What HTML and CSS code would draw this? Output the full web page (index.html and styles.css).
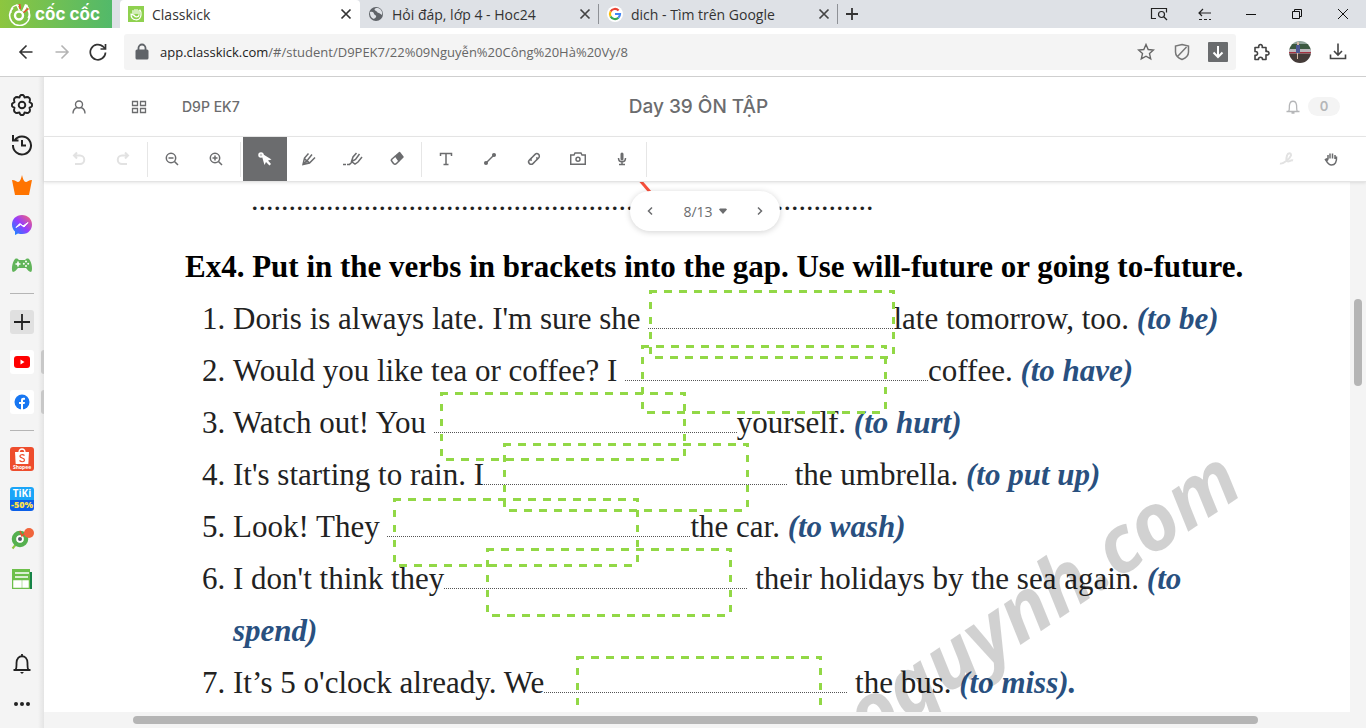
FILE: index.html
```html
<!DOCTYPE html>
<html lang="vi">
<head>
<meta charset="utf-8">
<title>Classkick</title>
<link rel="stylesheet" href="styles.css">
</head>
<body>
<div class="browser">
  <div class="tabbar">
    <div class="brand">
      <svg width="24" height="24" viewBox="0 0 24 24" fill="none"><path d="M5 6A10 10 0 1 0 20 8" stroke="#fff" stroke-width="1.6"/><path d="M3 11C2 4 9 2 12 4M19 4c3 3 3 9 1 12" stroke="#fff" stroke-width="1.2"/><circle cx="11" cy="13.500" r="4" stroke="#fff" stroke-width="2.400"/><path d="m11 9-3-6 1-1 3 6zM14 9l3-7 3 1-4 7z" fill="#fff"/><path d="m11.500 7-1-5 2 0 .5 5zM15 10l5-4 1 1-5 4z" fill="#ef4b2b"/></svg>
      <span>cốc cốc</span>
    </div>
    <div class="tab tab-active">
      <svg width="16" height="16" viewBox="0 0 16 16"><path fill="#8fd14f" d="M0 0h16v16H0z"/><g fill="none" stroke="#fff" stroke-width="1.200" stroke-linecap="round"><path d="M3 8c0 7 9 8 10 1 .3-2-.2-4-1-5M3 8l3 1.500M5 8V4.500M7 7.500V3.500M9 7.500V3.500M11 8V4.500M6 9c1 3 5 2 5 0"/></g></svg>
      <span class="tab-title">Classkick</span>
      <button class="tab-close" aria-label="Close tab"><svg width="12" height="12" viewBox="0 0 12 12"><path d="m1.500 1.500 9 9m0-9-9 9" stroke="#333" stroke-width="1.700"/></svg></button>
    </div>
    <div class="tab tab-divided">
      <svg width="16" height="16" viewBox="0 0 16 16"><circle cx="8" cy="8" r="7" fill="#5f6368"/><path d="M2 6c3-1 4 1 4 2s3 1 2 3-2 1-2 2l-2-1C2 10 2 8 2 6zM8 2c-2 1-2 2 0 3s1 2 3 2l3 2c1-3-1-6-4-7z" fill="#dee1e6"/></svg>
      <span class="tab-title">Hỏi đáp, lớp 4 - Hoc24</span>
      <button class="tab-close" aria-label="Close tab"><svg width="12" height="12" viewBox="0 0 12 12"><path d="m1.500 1.500 9 9m0-9-9 9" stroke="#444" stroke-width="1.700"/></svg></button>
    </div>
    <div class="tab tab-divided">
      <svg width="16" height="16" viewBox="0 0 16 16" fill="none"><circle cx="8" cy="8" r="8" fill="#fff"/><g stroke-width="2.200"><path d="M3.600 5.500A5 5 0 0 1 11.600 4.500" stroke="#ea4335"/><path d="M3.600 5.500a5 5 0 0 0 0 5" stroke="#fbbc05"/><path d="M3.600 10.500a5 5 0 0 0 7.800 1.200" stroke="#34a853"/><path d="M11.400 11.700A5 5 0 0 0 13 8H8" stroke="#4285f4"/></g></svg>
      <span class="tab-title">dich - Tìm trên Google</span>
      <button class="tab-close" aria-label="Close tab"><svg width="12" height="12" viewBox="0 0 12 12"><path d="m1.500 1.500 9 9m0-9-9 9" stroke="#444" stroke-width="1.700"/></svg></button>
    </div>
    <button class="new-tab" aria-label="New tab"><svg width="12" height="12" viewBox="0 0 12 12"><path d="M6 0v12M0 6h12" stroke="#333" stroke-width="1.800"/></svg></button>
    <div class="window-controls">
      <button aria-label="Search tabs"><svg width="18" height="14" viewBox="0 0 18 14" fill="none" stroke="#222" stroke-width="1.200"><path d="M6 11.500H1.500v-10h15v4"/><circle cx="11.500" cy="7.500" r="3"/><path d="m14 10 3 3"/></svg></button>
      <button aria-label="Restore"><svg width="16" height="14" viewBox="0 0 16 14" fill="none" stroke="#222" stroke-width="1.200"><path d="M14 6H2m4-4L2 6l3 3"/><path d="M2 12.500h12" stroke-dasharray="3 2"/></svg></button>
      <button aria-label="Minimize"><svg width="10" height="10" viewBox="0 0 10 10"><path d="M0 5.500h10" stroke="#111"/></svg></button>
      <button aria-label="Maximize"><svg width="10" height="10" viewBox="0 0 10 10" fill="none" stroke="#111"><path d="M.5 2.500h7v7h-7zM2.500 2.500v-2h7v7h-2"/></svg></button>
      <button aria-label="Close"><svg width="10" height="10" viewBox="0 0 10 10"><path d="m0 0 10 10M10 0 0 10" stroke="#111"/></svg></button>
    </div>
  </div>

  <div class="navbar">
    <div class="nav-buttons">
      <button aria-label="Back"><svg width="16" height="16" viewBox="0 0 16 16" fill="none" stroke="#333" stroke-width="1.600"><path d="M14.500 8H2m6.500-6.500L2 8l6.500 6.500"/></svg></button>
      <button aria-label="Forward"><svg width="16" height="16" viewBox="0 0 16 16" fill="none" stroke="#b4b4b4" stroke-width="1.600"><path d="M1.500 8H14M7.500 1.500 14 8l-6.500 6.500"/></svg></button>
      <button aria-label="Reload"><svg width="18" height="18" viewBox="0 0 18 18" fill="none" stroke="#333" stroke-width="1.700"><path d="M16.500 9.500A7.600 7.600 0 1 1 14 3.500l2 2M16.500 1v5h-5"/></svg></button>
    </div>
    <div class="address">
      <svg width="14" height="18" viewBox="0 0 14 18"><path d="M3.500 8V5a3.500 3.500 0 0 1 7 0v3" fill="none" stroke="#5f6368" stroke-width="1.800"/><rect x=".5" y="6.500" width="13" height="10" rx="1.500" fill="#5f6368"/></svg>
      <span class="url"><b>app.classkick.com</b>/#/student/D9PEK7/22%09Nguyễn%20Công%20Hà%20Vy/8</span>
      <button aria-label="Bookmark"><svg width="18" height="18" viewBox="0 0 18 18" fill="none" stroke="#666" stroke-width="1.400"><path d="m9 1.500 2.200 5 5.300.500-4 3.600 1.200 5.300L9 13.200l-4.700 2.700 1.200-5.300-4-3.600 5.300-.5z"/></svg></button>
      <button aria-label="Shield"><svg width="16" height="18" viewBox="0 0 16 18" fill="none" stroke="#777" stroke-width="1.500"><path d="M8 1.500 14.500 3v6c0 4-4 6.500-6.500 7.500C5.500 15.500 1.500 13 1.500 9V3zM3.500 13.500l9-9.500"/></svg></button>
      <button aria-label="Save page"><svg width="20" height="20" viewBox="0 0 20 20"><rect width="20" height="20" rx="1" fill="#6a6c6e"/><path d="M10 4v11m-4.500-4.500L10 15l4.500-4.500" fill="none" stroke="#fff" stroke-width="2"/></svg></button>
    </div>
    <div class="nav-tools">
      <button aria-label="Extensions"><svg width="18" height="18" viewBox="0 0 18 18" fill="none" stroke="#444" stroke-width="1.600" stroke-linejoin="round"><path d="M2 4.500h3.800c-1-4 4.400-4 3.400 0H13v4c4-1 4 4.400 0 3.400v4.600H9.500c.6-3-4.600-3-4 0H2v-4.200c3.400.6 3.400-4.400 0-3.800z"/></svg></button>
      <button aria-label="Profile"><svg width="22" height="22" viewBox="0 0 22 22"><clipPath id="avatar"><circle cx="11" cy="11" r="11"/></clipPath><g clip-path="url(#avatar)"><path fill="#8fa39a" d="M0 0h22v4H0z"/><path fill="#3c5941" d="M0 3h22v6H0z"/><path fill="#b9b7bb" d="M0 8h22v3H0z"/><path fill="#a33040" d="M0 11h22v1.500H0z"/><path fill="#453b39" d="M0 12.500h22V22H0z"/><path fill="#4b5793" d="M7 4h4v8H7z"/><path fill="#d5b9a8" d="M8 1h2v3H8zM8 12h1v6H8z"/></g></svg></button>
      <button aria-label="Downloads"><svg width="18" height="18" viewBox="0 0 18 18" fill="none" stroke="#444" stroke-width="1.600"><path d="M9 .5v11M5 8l4 4 4-4M1.500 11.500v4h15v-4"/></svg></button>
    </div>
  </div>

  <div class="body">
    <nav class="sidebar">
      <button aria-label="Settings"><svg width="22" height="22" viewBox="0 0 22 22" fill="none" stroke="#222" stroke-width="1.900" stroke-linejoin="round"><path d="m9 2 1-1h2l1 1 .5 1.500L16 3l1.500.3 1.200 1.200.3 1.500-.5 2.200L20 9l1 1v2l-1 1-1.500.7.5 2.300-.3 1.500-1.200 1.200-1.500.3-2.500-.5L13 20l-1 1h-2l-1-1-.5-1.500L6 19l-1.500-.3-1.200-1.200L3 16l.5-2.300L2 13l-1-1v-2l1-1 1.500-.8L3 6l.3-1.500 1.200-1.200L6 3l2.500.5z"/><circle cx="11" cy="11" r="3.300"/></svg></button>
      <button aria-label="History"><svg width="22" height="22" viewBox="0 0 22 22" fill="none" stroke="#222" stroke-width="2"><path d="M3.500 6.500A9 9 0 1 1 2 11M2 1v5.500h5.500M11 6v5.500h4"/></svg></button>
      <button aria-label="Rewards"><svg width="22" height="22" viewBox="0 0 22 22"><path d="M11 1c1 4 2 7 4 7 1 0 3-2 6-2l-3 15H4L1 6c3 0 5 2 6 2 2 0 3-3 4-7z" fill="#ff7400"/></svg></button>
      <button aria-label="Messenger"><svg width="22" height="22" viewBox="0 0 22 22"><defs><linearGradient id="msg" x1="0" y1="1" x2="1" y2="0"><stop stop-color="#0094ff"/><stop offset=".5" stop-color="#963cff"/><stop offset="1" stop-color="#ff6869"/></linearGradient></defs><path d="M11 1C5 1 1 5.300 1 10.600c0 3 1.300 5.500 3 7V21l3-1.500c10 2.500 14-4 14-9C21 5.300 17 1 11 1z" fill="url(#msg)"/><path d="m5 13.500 3.800-4 3.200 2.500 5-3.500-4 4.500-3.200-2.500z" fill="#fff" stroke="#fff"/></svg></button>
      <button aria-label="Games"><svg width="22" height="22" viewBox="0 0 22 22"><path d="M4 5c2-1 3 0 4 1h6c1-1 2-2 4-1 3 3 4 12 2 13-2 0-4-3-5-4H7c-1 1-3 4-5 4C0 17 1 8 4 5z" fill="#61b45a"/><path d="M7 7.500v5M4.500 10h5" stroke="#fff" stroke-width="1.600"/><g fill="#fff"><circle cx="15" cy="7.500" r="1"/><circle cx="15" cy="12" r="1"/><circle cx="12.800" cy="9.800" r="1"/><circle cx="17.200" cy="9.800" r="1"/></g></svg></button>
      <hr>
      <button class="tile tile-grey" aria-label="Add"><svg width="16" height="16" viewBox="0 0 16 16"><path d="M8 0v16M0 8h16" stroke="#222" stroke-width="1.800"/></svg></button>
      <button class="tile tile-open" aria-label="YouTube"><svg width="16" height="12" viewBox="0 0 16 12"><rect width="16" height="12" rx="3" fill="#f00"/><path d="m6.500 3.500 4 2.500-4 2.500z" fill="#fff"/></svg></button>
      <button class="tile tile-open" aria-label="Facebook"><svg width="16" height="16" viewBox="0 0 16 16"><circle cx="8" cy="8" r="7.500" fill="#1877f2"/><path d="M7 16v-6H5V8h2V6.500C7 4 8.500 3.500 11 4v1.700C9.500 5.500 9 5.800 9 6.800V8h2l-.4 2H9v6z" fill="#fff"/></svg></button>
      <hr>
      <button class="tile shopee" aria-label="Shopee"><svg width="24" height="24" viewBox="0 0 24 24"><path d="M5 5h14l-.7 12H5.700z" fill="#fff"/><path d="M9 5c.5-4 5.500-4 6 0" fill="none" stroke="#fff" stroke-width="1.300"/><path d="M14.500 8.500c-1.500-1.300-5-1-4.500 1s4.500 1 4.500 3.500-3.500 2-5 .5" fill="none" stroke="#ee4d2d" stroke-width="1.200"/><text x="12" y="22" text-anchor="middle" class="shop-label">Shopee</text></svg></button>
      <button class="tile tiki" aria-label="Tiki"><span>TiKi</span><b>-50%</b></button>
      <button aria-label="Coc Coc points"><svg width="24" height="24" viewBox="0 0 24 24" fill="none"><path d="m2.500 21.500 5-6" stroke="#8cc63f" stroke-width="2"/><circle cx="10" cy="12" r="6" stroke="#55b04f" stroke-width="4.500"/><circle cx="10" cy="12" r="3.500" fill="#fff"/><circle cx="10" cy="12" r="2" fill="#556" /><path d="m10 4 2 5 3-3" stroke="#ef4b2b" stroke-width="1.500"/><circle cx="19" cy="6" r="5" fill="#f0653c"/></svg></button>
      <button aria-label="News"><svg width="22" height="22" viewBox="0 0 22 22"><path d="M18 4h3v17H4z" fill="#168348"/><path d="M1 1h18v20H1z" fill="#6dbf4b"/><path d="M4 5h14M4 9h13M3 13h7v6H3zM12 13h5v6h-5z" fill="#fff" stroke="#fff" stroke-width="1.500"/></svg></button>
      <span class="spacer"></span>
      <button aria-label="Notifications"><svg width="20" height="22" viewBox="0 0 20 22" fill="none" stroke="#222" stroke-width="1.800"><path d="M1.500 17h17M3.500 17c1.300-2 1-4 1-7 0-9 11-9 11 0 0 3-.3 5 1 7M10 3.500V1"/><path d="M8 19h4l-2 2z" fill="#222" stroke="none"/></svg></button>
      <button aria-label="More"><svg width="18" height="6" viewBox="0 0 18 6" fill="#222"><circle cx="3" cy="3" r="2"/><circle cx="9" cy="3" r="2"/><circle cx="15" cy="3" r="2"/></svg></button>
    </nav>

    <main class="app">
      <header class="app-header">
        <div class="header-left">
          <button class="icon-button" aria-label="Account"><svg width="14" height="14" viewBox="0 0 14 14" fill="none" stroke="#6b6c6e" stroke-width="1.400"><circle cx="7" cy="4.500" r="3.500"/><path d="M1 13.500c0-4 2.500-5.500 4-6M13 13.500c0-4-2.500-5.500-4-6"/></svg></button>
          <button class="icon-button" aria-label="Assignments"><svg width="16" height="14" viewBox="0 0 16 14" fill="none" stroke="#6b6c6e" stroke-width="1.300"><path d="M1.500 1.500h5v4h-5zM9.500 1.500h5v4h-5zM1.500 8.500h5v4h-5zM9.500 8.500h5v4h-5z"/></svg></button>
          <span class="code">D9P EK7</span>
        </div>
        <h1>Day 39 ÔN TẬP</h1>
        <div class="header-right">
          <svg width="14" height="14" viewBox="0 0 14 14" fill="none" stroke="#b5b6b8" stroke-width="1.300"><path d="M.5 11.500h13M2.500 11.500C4 9.500 3 7 3.500 5c.7-5 6.300-5 7 0 .5 2-.5 4.500 1 6.500M5.500 13h3"/></svg>
          <span class="count">0</span>
        </div>
      </header>

      <div class="toolbar">
        <button class="faint" aria-label="Undo"><svg width="16" height="16" viewBox="0 0 16 16"><path d="M3 4.500h6a3.700 3.700 0 0 1 0 8.500H4M6 1.500l-3 3 3 3"/></svg></button>
        <button class="faint" aria-label="Redo"><svg width="16" height="16" viewBox="0 0 16 16"><path d="M13 4.500H7A3.700 3.700 0 0 0 7 13h5M10 1.500l3 3-3 3"/></svg></button>
        <span class="sep"></span>
        <button aria-label="Zoom out"><svg width="16" height="16" viewBox="0 0 16 16"><circle cx="7" cy="7" r="4.700"/><path d="m10.500 10.500 3.500 3.500M4.500 7h5"/></svg></button>
        <button aria-label="Zoom in"><svg width="16" height="16" viewBox="0 0 16 16"><circle cx="7" cy="7" r="4.700"/><path d="m10.500 10.500 3.500 3.500M4.500 7h5M7 4.500v5"/></svg></button>
        <span class="sep"></span>
        <button class="selected" aria-label="Select"><svg width="16" height="16" viewBox="0 0 16 16"><path d="m4 2 10.500 6.500-3.500 1 3 3.500-1.500 1.500-3.500-3.500L7.500 14z" fill="#fff" stroke="none"/><circle cx="4" cy="4" r="2" fill="#ccc" stroke="#fff"/></svg></button>
        <button aria-label="Pen"><svg width="16" height="16" viewBox="0 0 16 16"><path d="M7.500 2.500 3.500 7 2 13.500l6.500-1.500L14 6.500M2 13.500l5-5 4-5M3.500 7.500 5 9v2l2-.5 1.500 1.500"/></svg></button>
        <button aria-label="Highlighter"><svg width="20" height="16" viewBox="0 0 20 16"><path d="M13.500 2 10 6l-1.500 4.500L12 13l3-2 4-5M8.500 10.500l4-2 4-5.500M9.500 10.500l-3 3"/><path d="M0 13.500h7" stroke-dasharray="3 1"/></svg></button>
        <button aria-label="Eraser"><svg width="16" height="16" viewBox="0 0 16 16"><path d="m6.500 5 4-3.500L14 6l-4 4z" fill="#6b6c6e" stroke-linejoin="round"/><path d="M6.500 5 3 8c-1 1-1 1.500 0 2.500l1.500 2c1 1 2 1 3 0l2.500-2.500" stroke-linejoin="round"/></svg></button>
        <span class="sep"></span>
        <button aria-label="Text"><svg width="16" height="16" viewBox="0 0 16 16"><path d="M2.500 5V2.500h11V5M8 2.500v11M5.500 13.500h5"/></svg></button>
        <button aria-label="Line"><svg width="16" height="16" viewBox="0 0 16 16"><path d="m4 12 8-8"/><circle cx="4" cy="12" r="1.300" fill="#6b6c6e"/><circle cx="12" cy="4" r="1.300" fill="#6b6c6e"/></svg></button>
        <button aria-label="Link"><svg width="16" height="16" viewBox="0 0 16 16"><g transform="rotate(-45 8 8)"><path d="M9 10.500H4a2.500 2.500 0 0 1 0-5h3.500M7 5.500h5a2.500 2.500 0 0 1 0 5H8.500M9 10.500c1.500 0 2-1 2-2M7 5.500c-1.500 0-2 1-2 2"/></g></svg></button>
        <button aria-label="Camera"><svg width="16" height="16" viewBox="0 0 16 16"><path d="M.7 4H4l1-2h6l1 2h3.300v9.300H.7z"/><circle cx="8" cy="8.300" r="2"/></svg></button>
        <button aria-label="Record audio"><svg width="16" height="16" viewBox="0 0 16 16"><path d="M8 3v5" stroke-width="3" stroke-linecap="round"/><path d="M4.500 7c0 5 7 5 7 0M8 11v2.500M5 13.500h6"/></svg></button>
        <span class="sep"></span>
        <span class="spacer"></span>
        <button class="faint" aria-label="Signature"><svg width="16" height="16" viewBox="0 0 16 16"><path d="M1 12.500c3 1 10-5 11-8 0-3-3-3-4 0-1 4-1 6 1 6s3-2 5-1"/></svg></button>
        <button aria-label="Raise hand"><svg width="14" height="16" viewBox="0 0 14 16"><path d="M4 8.500V4M6 7.500V2.500M8.500 7.500V2.500M11 8V4M12.500 5.500C13 11 11 14 7.500 14 4 14 3 11 1.500 8.500l1-.5L4 9.500"/></svg></button>
      </div>

      <section class="workspace">
        <article class="sheet">
          <svg class="stroke" width="40" height="30" viewBox="0 0 40 30"><path d="m3-4 24 28" stroke="#f8503c" stroke-width="3"/></svg>
          <p class="leader">...................................................................................</p>
          <h2>Ex4. Put in the verbs in brackets into the gap. Use will-future or going to-future.</h2>
          <div class="items">
            <p><span class="num">1.</span><span>Doris is always late. I'm sure she <i class="gap gap-short"></i>late tomorrow, too. <em>(to be)</em></span></p>
            <p><span class="num">2.</span><span>Would you like tea or coffee? I <i class="gap"></i>coffee. <em>(to have)</em></span></p>
            <p><span class="num">3.</span><span>Watch out! You <i class="gap"></i>yourself. <em>(to hurt)</em></span></p>
            <p><span class="num">4.</span><span>It's starting to rain. I<i class="gap"></i> the umbrella. <em>(to put up)</em></span></p>
            <p><span class="num">5.</span><span>Look! They <i class="gap"></i>the car. <em>(to wash)</em></span></p>
            <p><span class="num">6.</span><span>I don't think they<i class="gap"></i> their holidays by the sea again. <em>(to<br>spend)</em></span></p>
            <p><span class="num">7.</span><span>It’s 5 o'clock already. We<i class="gap"></i> the bus. <em>(to miss).</em></span></p>
          </div>
          <div class="watermark">oquynh.com</div>
          <textarea class="answer a1" aria-label="Answer 1"></textarea>
          <textarea class="answer a2" aria-label="Answer 2"></textarea>
          <textarea class="answer a3" aria-label="Answer 3"></textarea>
          <textarea class="answer a4" aria-label="Answer 4"></textarea>
          <textarea class="answer a5" aria-label="Answer 5"></textarea>
          <textarea class="answer a6" aria-label="Answer 6"></textarea>
          <textarea class="answer a7" aria-label="Answer 7"></textarea>
        </article>
        <div class="track-y"><div class="thumb-y"></div></div>
        <div class="track-x"><div class="thumb-x"></div></div>
        <div class="pager">
          <button aria-label="Previous page"><svg width="8" height="10" viewBox="0 0 8 10" fill="none" stroke="#6b6c6e" stroke-width="1.500"><path d="M6 1.500 2.500 5 6 8.500"/></svg></button>
          <button class="page">8/13<svg width="8" height="6" viewBox="0 0 8 6"><path d="M1 .5h6l1 1L4 6 0 1.500z" fill="#6b6c6e"/></svg></button>
          <button aria-label="Next page"><svg width="8" height="10" viewBox="0 0 8 10" fill="none" stroke="#6b6c6e" stroke-width="1.500"><path d="M2 1.500 5.500 5 2 8.500"/></svg></button>
        </div>
      </section>
    </main>
  </div>
</div>
</body>
</html>
```
FILE: styles.css
```css
* { box-sizing: border-box; }
body { margin: 0; font-family: "Open Sans", "Noto Sans", sans-serif; font-size: 13px; color: #333; background: #fff; }
button { display: flex; align-items: center; justify-content: center; flex: none; padding: 0; border: 0; background: none; font: inherit; color: inherit; }
svg { display: block; flex: none; }
.spacer { flex: 1; }
.browser { display: flex; flex-direction: column; height: 100vh; overflow: hidden; }

.tabbar { display: flex; flex: none; height: 28px; background: #dee1e6; }
.brand { display: flex; align-items: center; gap: 3px; width: 112px; margin-right: 8px; padding-left: 8px; background: linear-gradient(90deg, #8dc63f, #52b96a); color: #fff; font-family: Inter, sans-serif; font-weight: 700; font-size: 17px; white-space: nowrap; }
.tab { display: flex; align-items: center; gap: 8px; width: 239px; padding: 0 8px; }
.tab-active { width: 240px; background: #fff; border-radius: 4px 4px 0 0; }
.tab-divided { background: linear-gradient(#8e9196, #8e9196) right center / 1px 20px no-repeat; }
.tab-title { flex: 1; font-size: 14px; white-space: nowrap; }
.new-tab { width: 28px; }
.window-controls { display: flex; margin-left: auto; }
.window-controls button { width: 46px; }

.navbar { display: flex; flex: none; align-items: center; height: 49px; border-bottom: 1px solid #cfcfcf; padding: 0 9px 0 8px; }
.nav-buttons { display: flex; width: 116px; }
.nav-buttons button { width: 36px; height: 36px; }
.address { display: flex; flex: 1; align-items: center; height: 36px; padding-left: 11px; background: #f4f4f4; border-radius: 3px; }
.address button { width: 36px; height: 36px; }
.url { flex: 1; margin-left: 11px; color: #666; }
.url b { font-weight: 400; color: #222; }
.nav-tools { display: flex; padding-left: 7px; }
.nav-tools button { width: 38px; height: 36px; }

.body { display: flex; flex: 1; min-height: 0; }
.sidebar { display: flex; flex-direction: column; align-items: center; flex: none; gap: 16px; width: 44px; padding: 16px 0 12px; background: linear-gradient(90deg, #f4f4f4 38px, #e4e4e4); }
.sidebar button { width: 24px; height: 24px; }
.sidebar hr { flex: none; width: 24px; height: 1px; margin: 0; border: 0; background: #b5b5b5; }
.sidebar .spacer { margin: -8px 0; }
.tile { position: relative; border-radius: 3px; background: #fff; }
.tile-grey { background: #e0e0e0; }
.tile-open::after { content: ""; position: absolute; left: 31px; top: 0; width: 3px; height: 24px; border-radius: 3px 0 0 3px; background: #c8c8c8; }
.shopee { background: #ee4d2d; }
.shop-label { font: 700 5px "Open Sans", sans-serif; fill: #fff; }
.sidebar .tiki { flex-direction: column; background: linear-gradient(#1aa5f8 54%, #0b5fe8 54%); font-size: 10px; line-height: 11px; font-weight: 700; color: #fff; }
.tiki b { color: #ffe14d; font-size: 9px; }

.app { display: flex; flex: 1; flex-direction: column; min-width: 0; color: #6b6c6e; }
.app-header { display: grid; grid-template-columns: 1fr auto 1fr; align-items: center; flex: none; height: 60px; padding: 0 26px 0 13px; border-bottom: 1px solid #e8e8e8; }
.header-left, .header-right { display: flex; align-items: center; }
.header-right { justify-content: flex-end; gap: 8px; }
.icon-button { width: 44px; height: 44px; margin-right: 16px; }
.code { margin-left: 5px; font: 500 14px Inter, sans-serif; }
h1 { margin: 0; font: 500 19px Inter, "Open Sans", sans-serif; }
.count { width: 32px; border-radius: 10px; background: #f4f4f4; text-align: center; font: 600 13px/19px Inter, sans-serif; color: #b5b6b8; }

.toolbar { position: relative; z-index: 2; display: flex; align-items: center; flex: none; height: 45px; padding: 0 13px; background: #fff; border-bottom: 1px solid #e4e4e4; box-shadow: 0 1px 3px rgba(0,0,0,.1); }
.toolbar button { width: 44px; height: 44px; }
.toolbar svg { fill: none; stroke: #6b6c6e; stroke-width: 1.5; }
.toolbar .faint svg { stroke: #e2e2e2; stroke-width: 2; }
.toolbar .selected { background: #6b6c6e; }
.sep { width: 1px; height: 35px; margin: 0 2px; background: #e6e6e6; }

.workspace { position: relative; display: grid; grid-template: 1fr 16px / 1fr 16px; flex: 1; min-height: 0; }
.sheet { position: relative; overflow: hidden; padding-left: 141px; font-family: "Liberation Serif", serif; font-size: 31px; line-height: 52px; color: #222; white-space: nowrap; }
.sheet p, .sheet h2 { margin: 0; }
.sheet .leader { margin: 0 0 23px 66px; font-size: 30px; line-height: 36px; }
.sheet h2 { font-size: 31px; color: #000; }
.items p { display: flex; padding-left: 17px; }
.num { width: 31px; }
.gap { display: inline-block; width: 303px; height: 2px; border-bottom: 1px dotted #555; }
.gap-short { width: 245px; }
.items em { font-weight: 700; color: #29507f; }
.stroke { position: absolute; left: 591px; top: 0; }
.watermark { position: absolute; right: 95px; top: 233px; font: italic 700 79px/90px "Open Sans", sans-serif; color: rgba(0,0,0,.18); transform: rotate(-34deg); transform-origin: right bottom; }
.answer {
  --c: #92d846;
  --h: repeating-linear-gradient(90deg, var(--c) 0 8px, transparent 8px 15px);
  --v: repeating-linear-gradient(var(--c) 0 4px, transparent 4px 12px, var(--c) 12px 15px);
  position: absolute; width: 246px; height: 69px; padding: 4px; border: 0; resize: none; outline: 0; overflow: hidden;
  background: var(--h) 0 0 / 100% 3px no-repeat, var(--h) 6px 100% / 100% 3px no-repeat, var(--v) 0 0 / 3px 100% no-repeat, var(--v) 100% 0 / 3px 100% no-repeat;
}
.a1 { left: 605px; top: 108px; }
.a2 { left: 597px; top: 163px; }
.a3 { left: 396px; top: 210px; }
.a4 { left: 459px; top: 261px; }
.a5 { left: 349px; top: 316px; }
.a6 { left: 442px; top: 366px; }
.a7 { left: 532px; top: 474px; }
.track-y { padding: 117px 4px 0; background: #f4f4f4; }
.thumb-y { height: 87px; border-radius: 4px; background: #b5b5b5; }
.track-x { grid-column: 1 / -1; padding: 4px 108px 0 89px; background: #f4f4f4; }
.thumb-x { height: 8px; border-radius: 4px; background: #b5b5b5; }
.pager { position: absolute; left: 50%; top: 9px; display: flex; align-items: center; justify-content: space-between; width: 150px; height: 40px; margin-left: -75px; border-radius: 20px; background: #fff; box-shadow: 0 1px 6px rgba(0,0,0,.18); }
.pager button { width: 40px; height: 40px; }
.pager .page { flex: 1; gap: 6px; font: 400 14px "Open Sans", sans-serif; }
```
